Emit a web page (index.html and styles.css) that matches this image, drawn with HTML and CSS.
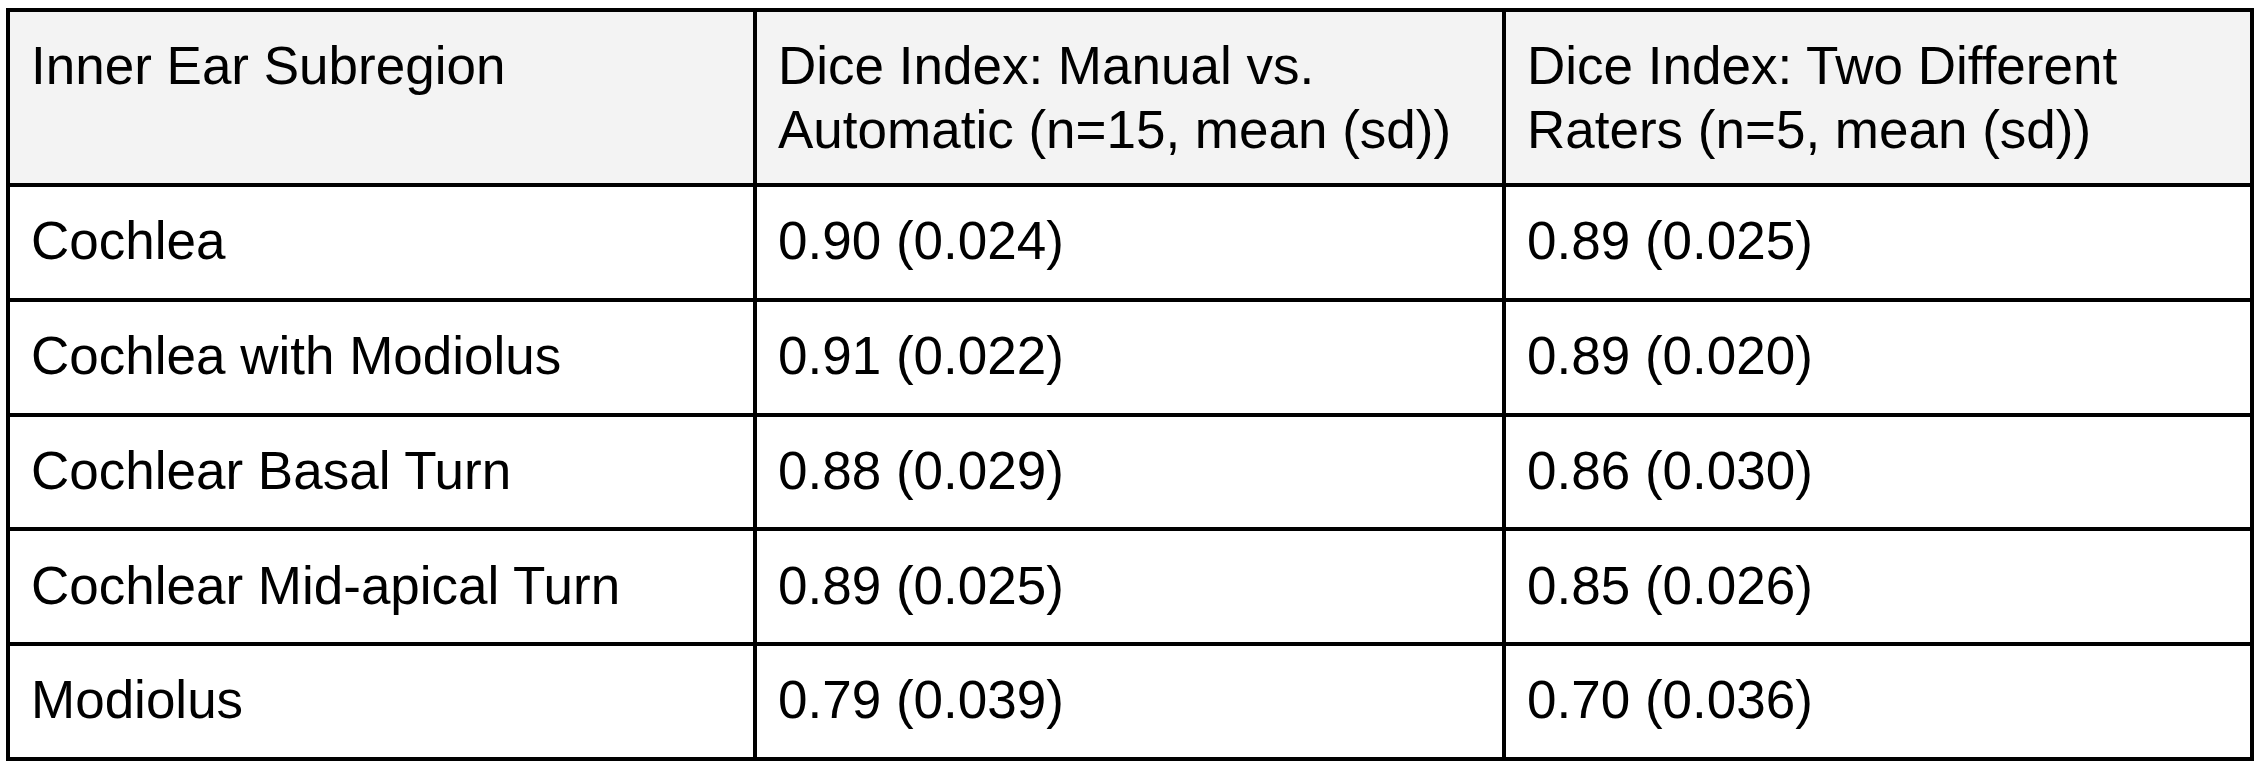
FILE: index.html
```html
<!DOCTYPE html>
<html>
<head>
<meta charset="utf-8">
<link rel="stylesheet" href="styles.css">
</head>
<body>
<table class="dice-table">
  <colgroup>
    <col class="col-a">
    <col class="col-b">
    <col class="col-c">
  </colgroup>
  <thead>
    <tr class="head-row">
      <th>Inner Ear Subregion</th>
      <th>Dice Index: Manual vs. Automatic (n=15, mean (sd))</th>
      <th>Dice Index: Two Different Raters (n=5, mean (sd))</th>
    </tr>
  </thead>
  <tbody>
    <tr><td>Cochlea</td><td>0.90 (0.024)</td><td>0.89 (0.025)</td></tr>
    <tr><td>Cochlea with Modiolus</td><td>0.91 (0.022)</td><td>0.89 (0.020)</td></tr>
    <tr><td>Cochlear Basal Turn</td><td>0.88 (0.029)</td><td>0.86 (0.030)</td></tr>
    <tr><td>Cochlear Mid-apical Turn</td><td>0.89 (0.025)</td><td>0.85 (0.026)</td></tr>
    <tr><td>Modiolus</td><td>0.79 (0.039)</td><td>0.70 (0.036)</td></tr>
  </tbody>
</table>
</body>
</html>
```

FILE: styles.css
```css
html, body {
  background: #ffffff;
}
body {
  margin: 8px 6px;
  font-family: "Liberation Sans", Arial, sans-serif;
  color: #000000;
}
.dice-table {
  border-collapse: collapse;
  width: 2248px;
  table-layout: fixed;
  font-size: 53px;
  line-height: 64px;
}
.col-a { width: 747px; }
.col-b { width: 749px; }
.col-c { width: 748px; }
.dice-table th,
.dice-table td {
  border: 4px solid #000000;
  text-align: left;
  vertical-align: top;
  font-weight: normal;
}
.dice-table td {
  padding: 22.3px 20px 24.5px 21px;
}
.head-row th {
  padding: 21.6px 20px 21.4px 21px;
  background: #f3f3f3;
}
```
